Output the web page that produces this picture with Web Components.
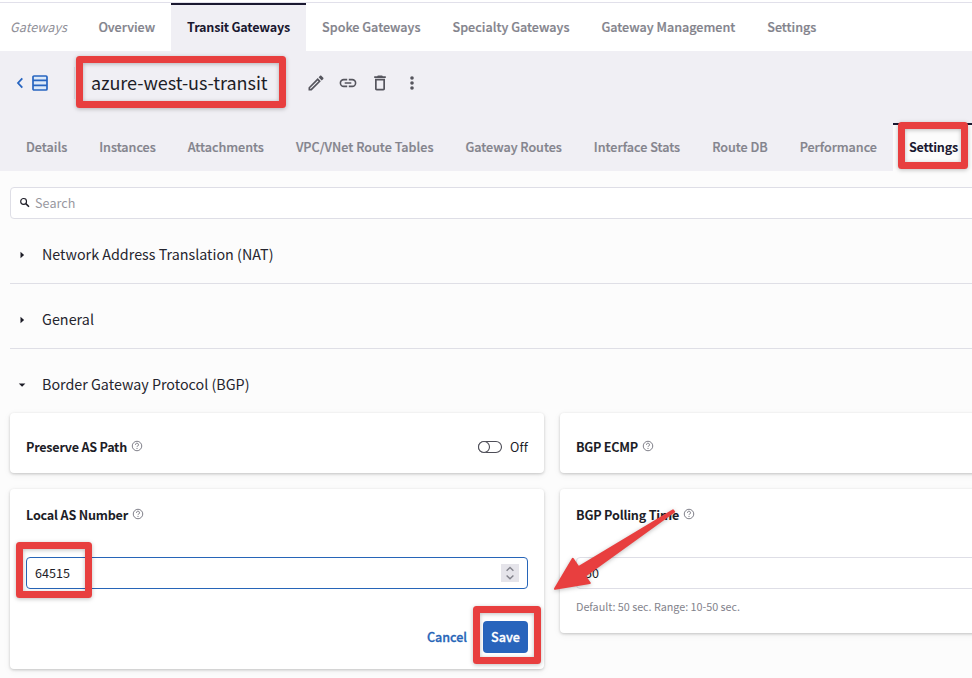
<!DOCTYPE html>
<html lang="en">
<head>
<meta charset="utf-8">
<title>Transit Gateway Settings</title>
<style>
  html, body { margin: 0; height: 678px; overflow: hidden; background: #fcfcfc; }
  body { font-family: "Noto Sans CJK JP", "Noto Sans", sans-serif; color: #1d1d27; }
</style>
</head>
<body>
<gateway-app></gateway-app>
<script>
const define = (name, html, after) => {
  const t = document.createElement('template');
  t.innerHTML = html;
  customElements.define(name, class extends HTMLElement {
    connectedCallback() {
      if (this.shadowRoot) return;
      this.attachShadow({ mode: 'open' }).append(t.content.cloneNode(true));
      if (after) after(this, this.shadowRoot);
    }
  });
};

/* Text run; "w" sets its advance width through letter spacing. */
define('ui-text', `<style>
  :host { display: inline-block; white-space: nowrap; flex: none; line-height: 20px; }
  span { display: inline-block; }
</style><span><slot></slot></span>`, (el, root) => {
  const w = parseFloat(el.getAttribute('w'));
  if (!w) return;
  const s = root.querySelector('span');
  const n = el.textContent.length;
  s.style.letterSpacing = ((w - s.getBoundingClientRect().width) / n) + 'px';
  el.style.width = w + 'px';
});

define('nav-tab', `<style>
  :host { display: flex; align-items: center; box-sizing: border-box; height: 48px; padding: 0 16px 2px;
    flex: none; border-top: 2px solid transparent; font-size: 12.6px; font-weight: 500; color: #83838c; -webkit-text-stroke: .2px #83838c; }
  :host([active]) { border-top-color: #1a1830; color: #1a1830; background: var(--active-bg); font-weight: 700; -webkit-text-stroke: 0; }
</style><slot></slot>`);

define('top-nav', `<style>
  :host { display: flex; box-sizing: border-box; height: 51px; padding-top: 2px; background: #fff; }
  div { display: flex; flex: 1; border-top: 1px solid #e1e0ea; --active-bg: #f0eff4; }
  .area { box-sizing: border-box; width: 82.4px; padding: 14px 0 0 10px; font-size: 12.6px; font-style: italic; color: #8f8f98; }
</style><div><span class="area"><ui-text w="57">Gateways</ui-text></span><slot></slot></div>`);

define('ui-icon', `<style>:host { display: block; flex: none; line-height: 0; } svg { display: block; }</style><svg></svg>`, (el, root) => {
  const icons = {
    back: [8, 12, '<path d="M6.3 1.3 2 6l4.3 4.7" fill="none" stroke="#2765c0" stroke-width="1.8"/>'],
    list: [16, 16, '<rect x="1" y="1" width="14" height="14" rx="1" fill="#dce9f8" stroke="#2765c0" stroke-width="1.7"/><path d="M1 5.4h14M1 10.4h14" stroke="#2765c0" stroke-width="1.6"/>'],
    edit: [20, 20, '<path fill="#55555d" d="m11.7 7.5.8.8-7.6 7.5h-.8v-.8l7.6-7.5M14.7 2.5c-.2 0-.4.1-.6.2l-1.5 1.6 3.1 3.1 1.6-1.5c.3-.4.3-.9 0-1.2l-2-2c-.2-.1-.4-.2-.6-.2m-3 2.6-9.2 9.3v3.1h3.1l9.2-9.3-3.1-3.1Z"/>'],
    link: [20, 20, '<path fill="#55555d" d="M3.2 10a2.6 2.6 0 0 1 2.6-2.6h3.4V5.8H5.8a4.2 4.2 0 0 0 0 8.4h3.4v-1.6H5.8A2.6 2.6 0 0 1 3.2 10m3.5.8h6.6V9.2H6.7v1.6m7.5-5h-3.4v1.6h3.4a2.6 2.6 0 0 1 0 5.2h-3.4v1.6h3.4a4.2 4.2 0 0 0 0-8.4Z"/>'],
    trash: [20, 20, '<path fill="#55555d" d="M5 15.8c0 1 .8 1.7 1.7 1.7h6.6c1 0 1.7-.8 1.7-1.7v-10H5v10m1.7-8.3h6.6v8.3H6.7V7.5m6.2-4.2-.8-.8H7.9l-.8.8H4.2V5h11.6V3.3h-2.9Z"/>'],
    more: [20, 20, '<g fill="#55555d"><circle cx="10" cy="5" r="1.8"/><circle cx="10" cy="10" r="1.8"/><circle cx="10" cy="15" r="1.8"/></g>'],
    search: [12, 12, '<circle cx="4.6" cy="4.4" r="2.9" fill="none" stroke="#1d1d27" stroke-width="1.15"/><path d="m6.8 6.6 3.2 3.2" stroke="#1d1d27" stroke-width="1.5"/>'],
    right: [12, 12, '<path d="M4.5 2.8v6.4l3.6-3.2z" fill="#1d1d27"/>'],
    down: [12, 12, '<path d="M2.8 4.6h6.6l-3.3 3.2z" fill="#1d1d27"/>'],
    help: [12, 12, '<circle cx="6" cy="6" r="4.75" fill="none" stroke="#71717a" stroke-width=".9"/><path d="M4.5 4.8a1.5 1.5 0 1 1 2.2 1.2c-.5.3-.7.5-.7 1.1M6 8v1" fill="none" stroke="#71717a" stroke-width=".9"/>'],
    toggle: [26, 14, '<rect x="1.5" y="1.5" width="23" height="11" rx="5.5" fill="#fff" stroke="#4d4d57" stroke-width="1.1"/><circle cx="7" cy="7" r="5.5" fill="#fff" stroke="#4d4d57" stroke-width="1.1"/>'],
    spin: [18, 18, '<path fill="#e5e4ea" d="M0 0h18v18H0z"/><path d="m5.6 6.8 3.4-3.3 3.4 3.3M5.6 11.4 9 14.7l3.4-3.3" fill="none" stroke="#83838c" stroke-width="1.4"/>']
  };
  const [w, h, body] = icons[el.getAttribute('name')];
  const svg = root.querySelector('svg');
  svg.setAttribute('width', w); svg.setAttribute('height', h);
  svg.setAttribute('viewBox', `0 0 ${w} ${h}`);
  svg.innerHTML = body;
});

define('page-header', `<style>
  :host { display: block; height: 120px; background: #f0eff4; }
  .bar { display: flex; align-items: center; height: 64px; padding-left: 16px; margin-bottom: 8px; }
  .list { margin-left: 8px; }
  .name { box-sizing: border-box; width: 211px; height: 32px; margin-left: 26px; padding-left: 16px;
    border-left: 1px solid #dedde4; font-size: 18px; line-height: 30px; }
  .name ui-text { line-height: 30px; }
  .tools { display: flex; gap: 12px; margin-left: 21px; }
  .tabs { display: flex; padding-left: 10px; --active-bg: #fcfcfc; }
</style>
<div class="bar"><ui-icon name="back"></ui-icon><ui-icon class="list" name="list"></ui-icon>
<div class="name"><ui-text w="176.6">azure-west-us-transit</ui-text></div>
<div class="tools"><ui-icon name="edit"></ui-icon><ui-icon name="link"></ui-icon><ui-icon name="trash"></ui-icon><ui-icon name="more"></ui-icon></div></div>
<div class="tabs"><slot></slot></div>`);

define('search-box', `<style>
  :host { display: flex; align-items: center; box-sizing: border-box; height: 32px; padding-left: 8px; gap: 4px;
    border: 1px solid #dedee6; border-radius: 4px; background: #fff; font-size: 12.6px; color: #98989f; }
</style><ui-icon name="search"></ui-icon><ui-text w="40.5">Search</ui-text>`);

define('accordion-row', `<style>
  :host { display: flex; align-items: center; box-sizing: border-box; height: 57px; margin-top: 8px; padding-left: 6px; gap: 14px;
    border-bottom: 1px solid #dfdfe6; font-size: 14.3px; color: #25252e; }
  :host([open]) { height: 56px; border-bottom: 0; }
  ::slotted(ui-text) { padding-bottom: 2px; }
</style><slot></slot>`, (el, root) => {
  const icon = document.createElement('ui-icon');
  icon.setAttribute('name', el.hasAttribute('open') ? 'down' : 'right');
  root.querySelector('slot').before(icon);
});

define('setting-card', `<style>
  :host { display: block; box-sizing: border-box; padding: 16px; border-radius: 4px; background: #fff;
    box-shadow: 0 1px 3px rgba(0,0,0,.2), 0 2px 8px rgba(0,0,0,.05); }
  .head { display: flex; align-items: center; height: 20px; }
  .label { font-size: 12.6px; font-weight: 700; }
  .help { margin: -2px 0 0 4px; }
  ::slotted([slot=end]) { margin-left: auto; }
  :host([short]) { height: 60px; padding-top: 24px; }
</style><div class="head"><slot class="label" name="label"></slot><ui-icon class="help" name="help"></ui-icon><slot class="end" name="end"></slot></div><slot></slot>`);

define('number-field', `<style>
  :host { display: flex; align-items: center; justify-content: space-between; box-sizing: border-box; height: 32px; margin-top: 32px;
    padding: 0 8px; border: 1px solid #dedee6; border-radius: 4px; background: #fff; font-size: 12.6px; }
  :host([focused]) { border-color: #2765b8; }
  ui-icon { display: none; }
  :host([focused]) ui-icon { display: block; }
</style><slot></slot><ui-icon name="spin"></ui-icon>`);

define('action-button', `<style>
  :host { display: flex; align-items: center; justify-content: center; box-sizing: border-box; height: 32px; padding: 0 8px;
    border-radius: 4px; font-size: 12.6px; font-weight: 500; color: #2765b8; -webkit-text-stroke: .3px currentColor; }
  :host([primary]) { background: #2864bc; color: #fff; }
</style><slot></slot>`);

/* Red callouts laid over the page. */
define('callout-box', `<style>
  :host { position: absolute; box-sizing: border-box; border: 7px solid #e83f3f; border-radius: 3.5px;
    filter: drop-shadow(0 1px 2px rgba(0,0,0,.25)); }
</style>`);
define('callout-arrow', `<style>
  :host { position: absolute; left: 545px; top: 500px; width: 140px; height: 100px; }
  svg { display: block; filter: drop-shadow(0 1px 2px rgba(0,0,0,.25)); }
</style><svg width="140" height="100" viewBox="545 500 140 100"><path d="M555 588.8 572.8 558.8 578.6 567.2 673 510.3 674.1 511.8 584.9 576 589.8 583Z" fill="#e83f3f" stroke="#e83f3f" stroke-width="2" stroke-linejoin="round"/></svg>`);

define('gateway-app', `<style>
  :host { display: block; position: relative; width: 972px; height: 678px; overflow: hidden; }
  main { width: 1084px; padding: 16px 0 0 10px; }
  .cards { display: grid; grid-template-columns: 534px 534px; gap: 16px; align-items: start; }
  .state { display: flex; align-items: center; gap: 7px; font-size: 12.6px; }
  .hint { display: flex; height: 20px; margin-top: 7px; font-size: 10.8px; color: #83838c; }
  .actions { display: flex; justify-content: flex-end; gap: 8px; margin-top: 32px; }
  .tall { height: 180px; } .mid { height: 144px; }
</style>
<top-nav>
  <nav-tab><ui-text w="56.7">Overview</ui-text></nav-tab>
  <nav-tab active><ui-text w="103">Transit Gateways</ui-text></nav-tab>
  <nav-tab><ui-text w="98.4">Spoke Gateways</ui-text></nav-tab>
  <nav-tab><ui-text w="117">Specialty Gateways</ui-text></nav-tab>
  <nav-tab><ui-text w="133.8">Gateway Management</ui-text></nav-tab>
  <nav-tab><ui-text w="49">Settings</ui-text></nav-tab>
</top-nav>
<page-header>
  <nav-tab><ui-text w="41.2">Details</ui-text></nav-tab>
  <nav-tab><ui-text w="56.5">Instances</ui-text></nav-tab>
  <nav-tab><ui-text w="76.2">Attachments</ui-text></nav-tab>
  <nav-tab><ui-text w="137.6">VPC/VNet Route Tables</ui-text></nav-tab>
  <nav-tab><ui-text w="96.3">Gateway Routes</ui-text></nav-tab>
  <nav-tab><ui-text w="86.4">Interface Stats</ui-text></nav-tab>
  <nav-tab><ui-text w="55.5">Route DB</ui-text></nav-tab>
  <nav-tab><ui-text w="77.3">Performance</ui-text></nav-tab>
  <nav-tab active><ui-text w="49">Settings</ui-text></nav-tab>
</page-header>
<main>
  <search-box></search-box>
  <accordion-row><ui-text w="231.5">Network Address Translation (NAT)</ui-text></accordion-row>
  <accordion-row><ui-text w="52">General</ui-text></accordion-row>
  <accordion-row open><ui-text w="207.5">Border Gateway Protocol (BGP)</ui-text></accordion-row>
  <div class="cards">
    <setting-card short><ui-text slot="label" w="101">Preserve AS Path</ui-text>
      <div class="state" slot="end"><ui-icon name="toggle"></ui-icon><ui-text w="18">Off</ui-text></div></setting-card>
    <setting-card short><ui-text slot="label" w="62">BGP ECMP</ui-text></setting-card>
    <setting-card class="tall"><ui-text slot="label" w="102">Local AS Number</ui-text>
      <number-field focused><ui-text w="35">64515</ui-text></number-field>
      <div class="actions"><action-button><ui-text w="40">Cancel</ui-text></action-button><action-button primary><ui-text w="29">Save</ui-text></action-button></div></setting-card>
    <setting-card class="mid"><ui-text slot="label" w="103">BGP Polling Time</ui-text>
      <number-field><ui-text w="14">50</ui-text></number-field>
      <div class="hint"><ui-text w="164">Default: 50 sec. Range: 10-50 sec.</ui-text></div></setting-card>
  </div>
</main>
<callout-box style="left:75.5px;top:56px;width:210.5px;height:51.5px"></callout-box>
<callout-box style="left:898px;top:122px;width:70px;height:47px"></callout-box>
<callout-box style="left:16px;top:542px;width:76px;height:56px"></callout-box>
<callout-box style="left:473px;top:606px;width:68px;height:58px"></callout-box>
<callout-arrow></callout-arrow>`);
</script>
</body>
</html>
